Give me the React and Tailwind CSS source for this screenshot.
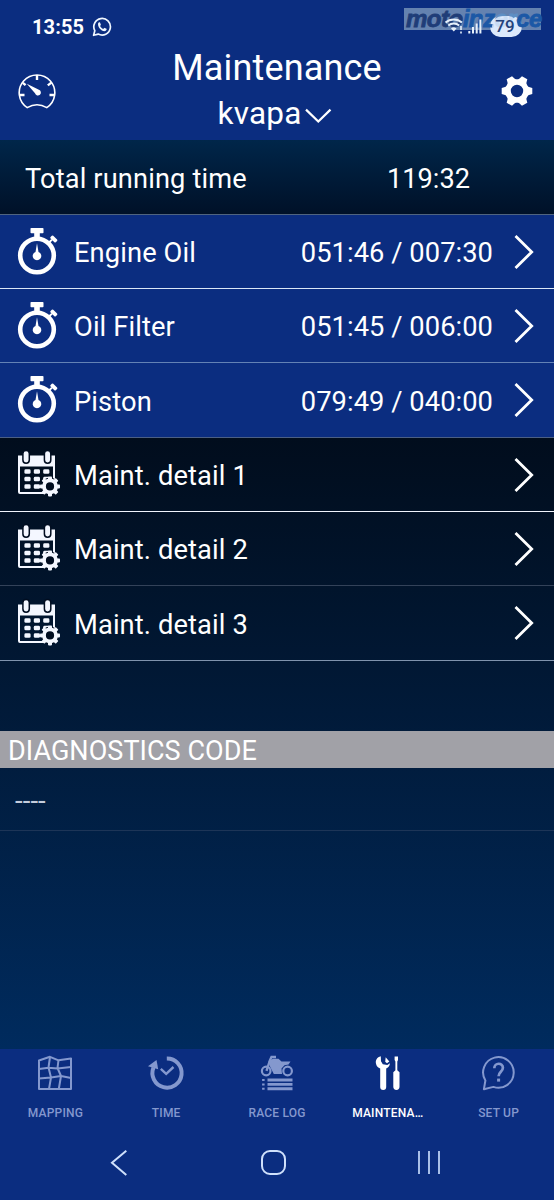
import React from "react";

const ROTATIONS_6 = [0, 60, 120, 180, 240, 300];
const ROTATIONS_8 = [0, 45, 90, 135, 180, 225, 270, 315];

function WhatsAppIcon() {
  return (
    <svg width="20" height="20" viewBox="0 0 20 20" className="ml-[8px]" fill="none" stroke="#f0f7ff">
      <path d="M1.6 18.3 L2.8 13.7 A8.3 8.3 0 1 1 6.2 17.1 Z" strokeWidth="1.7" strokeLinejoin="round" />
      <path
        d="M6.2 6 C6.9 5 7.7 5 8 5.6 L8.8 7.4 C9 7.9 8.2 8.5 8.1 8.9 C8.8 10.4 9.8 11.3 11.3 11.9 C11.8 11.7 12.3 10.7 12.8 10.9 L14.5 11.8 C15 12.2 14.4 13.6 13.3 14.1 C10 15 5 10 6.2 6 Z"
        fill="#f0f7ff"
        stroke="none"
      />
    </svg>
  );
}

function StatusIcons() {
  return (
    <svg width="44" height="22" viewBox="0 0 44 22" className="absolute left-[40px] top-[6px]" fill="none" stroke="#e6f0fb">
      <path d="M1.5 8.5 A12.5 12.5 0 0 1 18 8.5" strokeWidth="2" />
      <path d="M4.3 11.5 A8.4 8.4 0 0 1 15.2 11.5" strokeWidth="2" />
      <path d="M7 14.5 A4.3 4.3 0 0 1 12.5 14.5 L9.8 17.6 Z" fill="#e6f0fb" stroke="none" />
      <path d="M17 12 V16 M17 17.6 V19.6" strokeWidth="1.6" />
      <path d="M25.3 17 V19.6 M29 13 V19.6 M32.7 9.5 V19.6 M36.4 5.5 V19.6" strokeWidth="2" />
    </svg>
  );
}

function Watermark() {
  return (
    <div className="relative h-[22px] w-[137px] bg-[#6482b0]">
      <div className="absolute left-[86px] top-[8px] h-[21px] w-[32px] rounded-full bg-[#dce9fb]" />
      <div className="absolute left-[2px] top-[-4px] whitespace-nowrap font-['Liberation_Sans'] text-[24px] font-bold italic leading-[30px] tracking-[-0.5px] [-webkit-text-stroke:0.8px_currentColor]">
        <span className="text-[#1f3d78]">moto</span>
        <span className="text-[#1b58a6]">inz</span>
        <span className="text-[#5e8fc4]">er</span>
        <span className="text-[#1b58a6]">ce</span>
      </div>
      <StatusIcons />
      <div className="absolute left-[88px] top-[8px] flex h-[21px] w-[26px] items-center justify-center rounded-full bg-[#dce9fb]/85 font-['Roboto'] text-[17px] font-medium text-[#24427a]">
        79
      </div>
    </div>
  );
}

function GaugeIcon() {
  return (
    <svg width="40" height="38" viewBox="0 0 40 38" fill="none" stroke="#fff">
      <path d="M9.2 34.6 A17.8 17.8 0 1 1 28.8 34.6 Q19 29 9.2 34.6 Z" strokeWidth="1.6" strokeLinejoin="round" />
      <path d="M19 2 V7 M2 22 H6.5 M36 22 H31.5 M4.8 9.8 L7.6 12.2 M33.4 9.6 L29.8 12.4" strokeWidth="2.4" />
      <path d="M8.8 10.8 L20.9 16.7 A3 3 0 1 1 17 20.3 Z" fill="#fff" stroke="none" />
    </svg>
  );
}

function SettingsGear() {
  return (
    <svg width="32" height="32" viewBox="-16 -16 32 32" fill="#fff" className="mb-[2px]">
      {ROTATIONS_6.map((angle) => (
        <path key={angle} d="M9 -5.6 L12 -4 L15.3 -3.1 V3.1 L12 4 L9 5.6 Z" transform={`rotate(${angle})`} />
      ))}
      <circle r="9" fill="none" stroke="#fff" strokeWidth="5.6" />
    </svg>
  );
}

function StopwatchIcon() {
  return (
    <svg width="44" height="54" viewBox="0 0 44 54" fill="#fff" className="mt-[2px]">
      <rect x="14.5" y="2" width="13" height="5.2" rx="0.8" />
      <rect x="18.2" y="6" width="5.6" height="6" />
      <rect x="-3.7" y="-1.9" width="7.4" height="3.8" rx="1" transform="translate(37.8 13) rotate(45)" />
      <path d="M32.5 17 L36 13.6" stroke="#fff" strokeWidth="2" />
      <circle cx="21" cy="29.5" r="16.8" fill="none" stroke="#fff" strokeWidth="4.6" />
      <path d="M21 17.2 L22.5 26 A4.3 4.3 0 1 1 19.5 26 Z" />
    </svg>
  );
}

function CalendarGearIcon() {
  return (
    <svg width="46" height="54" viewBox="0 0 46 54" className="mt-[3px]">
      <rect x="3" y="7.9" width="35" height="36" rx="1" fill="none" stroke="#f4f7ff" strokeWidth="2" />
      <rect x="2" y="6.5" width="37" height="11" fill="#f4f7ff" />
      <g fill="#f4f7ff" stroke="#010d20" strokeWidth="1.5">
        <rect x="6.9" y="1.4" width="6.4" height="12.8" rx="3.2" />
        <rect x="28.4" y="1.4" width="6.4" height="12.8" rx="3.2" />
      </g>
      {[20.3, 27.8, 35.3].map((y) =>
        [8.4, 17.8, 27.2].map((x) => (
          <rect key={`${x}-${y}`} x={x} y={y} width="6.2" height="4.5" rx="1.4" fill="#f4f7ff" />
        )),
      )}
      <g transform="translate(34 37.4)">
        <circle r="9" fill="#010d20" />
        {ROTATIONS_8.map((angle) => (
          <rect key={angle} x="5" y="-2" width="5" height="4" rx="0.8" transform={`rotate(${angle})`} fill="#f4f7ff" />
        ))}
        <circle r="6" fill="none" stroke="#f4f7ff" strokeWidth="3.8" />
      </g>
    </svg>
  );
}

function Chevron() {
  return (
    <svg width="22" height="36" viewBox="0 0 22 36" fill="none" stroke="#fff" strokeWidth="2.8">
      <path d="M1.5 2 L17.7 18 L1.5 34" />
    </svg>
  );
}

function MapIcon() {
  return (
    <svg width="36" height="36" viewBox="0 0 36 36" fill="none" stroke="currentColor" strokeWidth="2" strokeLinejoin="round">
      <path d="M2 5.5 L13 1.8 L21.5 5.3 L34 3.5 V34 H2 Z" />
      <path d="M13 2 L11.5 12.5 L14 22.5 L12 34 M21.5 5 L20.5 13 L24 21 L21.8 34 M2 14 L11.5 12.8 L20.5 13.5 L34 12 M2 23.5 L14 22.5 L24 21 L34 23" />
    </svg>
  );
}

function TimeIcon() {
  return (
    <svg width="38" height="36" viewBox="0 0 38 36" fill="none" stroke="currentColor">
      <path d="M19.8 3.4 A14.6 14.6 0 1 1 6.5 12.5" strokeWidth="4" />
      <path d="M1 11.2 L9.5 5 L11.2 14.2 Z" fill="currentColor" stroke="none" />
      <path d="M13.8 13.8 L19.2 18.8 L26.5 12" strokeWidth="2.4" />
    </svg>
  );
}

function RaceLogIcon() {
  return (
    <svg width="36" height="36" viewBox="0 0 36 36" fill="none" stroke="currentColor">
      <circle cx="7.2" cy="16" r="4.3" strokeWidth="2.2" />
      <circle cx="28.6" cy="16" r="4.3" strokeWidth="2.2" />
      <path d="M17 2 H12.5 L11 5.2 L7.5 15.8" strokeWidth="2.4" />
      <path d="M9.5 6 L14 3.8 L19.5 3.8 L22.5 6.6 L31.5 6.6 L29.5 9.4 L25.5 10.2 L22.5 13.5 L23 19 H14.8 L11 11.5 Z" fill="currentColor" stroke="none" />
      <path d="M8.5 25 H33.5 M8.5 29.4 H33.5 M8.5 33.8 H33.5" strokeWidth="2.9" />
      <path d="M3.1 25 H5.6 M3.1 29.4 H5.6 M3.1 33.8 H5.6" strokeWidth="2" />
    </svg>
  );
}

function ToolsIcon() {
  return (
    <svg width="36" height="36" viewBox="0 0 36 36" fill="currentColor">
      <path d="M10.8 1.2 C7 2.3 5.4 5 5.9 8.2 C6.3 11.2 8.2 12.6 10.2 13.6 V32 A3 3 0 0 0 16.2 32 V13.6 C18 12.6 19.6 11.2 20 8.2 L17.3 9.9 L12.8 9.3 L11 6.3 Z" />
      <path d="M15.7 2.2 L19.3 6.6 L17 8.3 L15.2 6.8 Z" />
      <path d="M24.6 1.5 H28 V5 L27.3 6.5 V15.2 L29.5 17.2 V31.8 A3.1 3.1 0 0 1 23.3 31.8 V17.2 L25.4 15.2 V6.5 L24.6 5 Z" />
    </svg>
  );
}

function HelpBubbleIcon() {
  return (
    <svg width="36" height="36" viewBox="0 0 36 36" fill="none" stroke="currentColor" strokeWidth="2">
      <path d="M4.4 25.5 A15.3 15.3 0 1 1 12.4 31.9 L2.9 34.2 Z" strokeLinejoin="round" />
      <path d="M13.3 13.3 C13.3 7.2 21.9 7.4 21.9 12.8 C21.9 16.8 17.6 16.8 17.6 21.3" strokeWidth="2.7" />
      <rect x="16.1" y="23.6" width="3" height="3" fill="currentColor" stroke="none" />
    </svg>
  );
}

const counters = [
  { label: "Engine Oil", value: "051:46 / 007:30", height: "h-[74px]", border: "border-[#dbe7f6]" },
  { label: "Oil Filter", value: "051:45 / 006:00", height: "h-[74px]", border: "border-[#6482b5]" },
  { label: "Piston", value: "079:49 / 040:00", height: "h-[75px]", border: "border-[#4b5f84]" },
];

const details = [
  { label: "Maint. detail 1", height: "h-[74px]", border: "border-[#f0f4fc]" },
  { label: "Maint. detail 2", height: "h-[74px]", border: "border-[#334259]" },
  { label: "Maint. detail 3", height: "h-[75px]", border: "border-[#8093ad]" },
];

const tabs = [
  { label: "MAPPING", Icon: MapIcon },
  { label: "TIME", Icon: TimeIcon },
  { label: "RACE LOG", Icon: RaceLogIcon },
  { label: "MAINTENA…", Icon: ToolsIcon, active: true },
  { label: "SET UP", Icon: HelpBubbleIcon },
];

function Header() {
  return (
    <header className="flex h-[140px] flex-col bg-[#0b2d80] text-white">
      <div className="flex h-[45px] items-start justify-between pl-[32px] pr-[13px] pt-[8px]">
        <div className="flex items-center pt-[9px]">
          <span className="font-['Roboto'] text-[20px] font-bold leading-5 tracking-[0.1px]">13:55</span>
          <WhatsAppIcon />
        </div>
        <Watermark />
      </div>
      <div className="flex h-[94px] items-center justify-between pl-[18px] pr-[21px]">
        <GaugeIcon />
        <div className="flex flex-col items-center pr-[5px]">
          <h1 className="text-[36px] leading-[44px] tracking-[0.15px]">Maintenance</h1>
          <button className="flex items-center gap-[3px] pr-[4px] text-[31.5px] leading-[48px]">
            <span className="tracking-[0.2px]">kvapa</span>
            <svg width="28" height="18" viewBox="0 0 28 18" fill="none" stroke="#fff" strokeWidth="2.2" className="mt-[3px]">
              <path d="M2 2.6 L14.3 14.5 L26.5 2.6" />
            </svg>
          </button>
        </div>
        <SettingsGear />
      </div>
    </header>
  );
}

export default function App() {
  return (
    <div className="flex h-[1200px] w-[554px] flex-col overflow-hidden bg-[#010d1f] font-['Roboto',sans-serif] text-white">
      <Header />
      <div className="flex h-[75px] items-center border-b border-[#50647f] bg-linear-to-b from-[#00264a] to-[#001128] pl-[25px] text-[27.2px]">
        <span className="w-[362px] pt-[4px] tracking-[0.15px]">Total running time</span>
        <span className="pt-[4px]">119:32</span>
      </div>
      <ul>
        {counters.map(({ label, value, height, border }) => (
          <li key={label} className={`flex items-center border-b bg-[#0b2d80] pl-[16px] pr-[18px] text-[27.3px] ${height} ${border}`}>
            <StopwatchIcon />
            <span className="flex-1 pl-[14px] pt-[4px] tracking-[0.1px]">{label}</span>
            <span className="pr-[21px] pt-[4px] tracking-[0.05px]">{value}</span>
            <Chevron />
          </li>
        ))}
      </ul>
      <div className="flex flex-1 flex-col bg-linear-to-b from-[#010d1d] to-[#002b5e]">
        <ul>
          {details.map(({ label, height, border }) => (
            <li key={label} className={`flex items-center border-b pl-[16px] pr-[18px] text-[27.3px] ${height} ${border}`}>
              <CalendarGearIcon />
              <span className="flex-1 pl-[12px] pt-[4px] tracking-[0.1px]">{label}</span>
              <Chevron />
            </li>
          ))}
        </ul>
        <h2 className="mt-[70px] flex h-[37px] items-center bg-[#a1a1a7] pl-[8px] pt-[4px] text-[27px] tracking-[0.05px]">DIAGNOSTICS CODE</h2>
        <div className="flex h-[63px] items-center border-b border-[#1d3557] pl-[15px] pt-[3px] text-[27.5px] tracking-[0.1px] text-[#c5cddd]">----</div>
      </div>
      <nav className="flex h-[80px] bg-[#0b2d80]">
        {tabs.map(({ label, Icon, active }) => (
          <div key={label} className={`flex flex-1 flex-col items-center pt-[6px] ${active ? "text-white" : "text-[#8498ce]"}`}>
            <Icon />
            <span className="mt-[13px] text-[12px] font-medium leading-[18px] tracking-[0.2px]">{label}</span>
          </div>
        ))}
      </nav>
      <div className="flex h-[71px] items-start bg-[#0b2d80] pl-[109px] pt-[20px]">
        <svg width="20" height="28" viewBox="0 0 20 28" fill="none" stroke="#cfe0fb" strokeWidth="2">
          <path d="M17.3 1.8 L3 13.8 L17.3 26" />
        </svg>
        <div className="ml-[132px] mt-px h-[25px] w-[25px] rounded-[9px] border-2 border-[#cfe0fb]" />
        <div className="ml-[132px] mt-[2px] flex h-[23px] w-[22px] justify-between">
          <i className="w-[2px] bg-[#a9bfe8]" />
          <i className="w-[2px] bg-[#a9bfe8]" />
          <i className="w-[2px] bg-[#a9bfe8]" />
        </div>
      </div>
    </div>
  );
}
